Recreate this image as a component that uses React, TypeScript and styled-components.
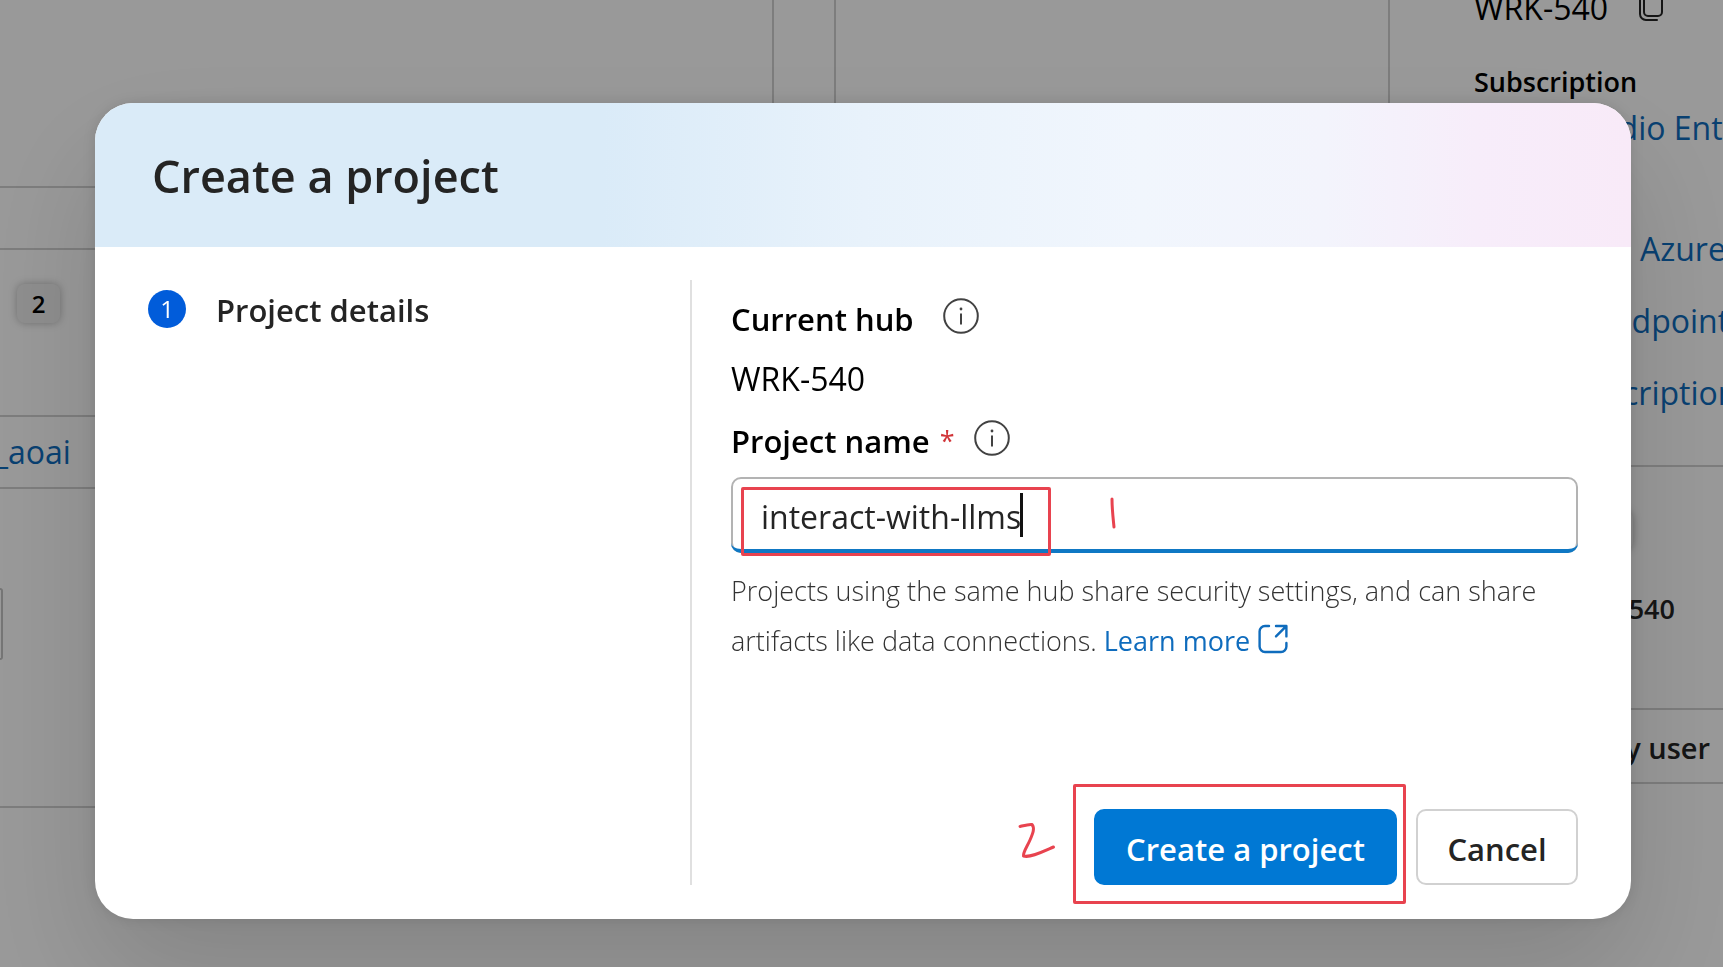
import React from "react";
import styled, { createGlobalStyle } from "styled-components";

const GlobalStyle = createGlobalStyle`
  *, *::before, *::after { box-sizing: border-box; }
  html, body { margin: 0; padding: 0; height: 100%; overflow: hidden; }
  body { background: #fff; color: #000; font-family: "Open Sans", "Noto Sans", sans-serif; }
  button, input { font-family: inherit; }
  h1, h2, p { margin: 0; }
`;

/* ---------- page behind the dialog ---------- */

const Page = styled.main`
  display: grid;
  grid-template-columns: 774fr 556fr 273fr;
  column-gap: 60px;
  height: 100vh;
  overflow: hidden;
`;

const Column = styled.div`
  display: flex;
  flex-direction: column;
  min-width: 0;
`;

const Card = styled.section<{ $height: number; $open?: boolean }>`
  height: ${(p) => p.$height}px;
  border: 2px solid #d1d1d1;
  border-left: ${(p) => (p.$open ? "0" : "2px solid #d1d1d1")};
  border-top-width: ${(p) => (p.$open ? "2px" : "0")};
  flex: none;
`;

const TopCard = styled(Card)`
  border-top: 0;
  margin-bottom: 60px;
`;

const CardHead = styled.div`
  height: 165px;
  padding: 34px 17px;
`;

const CountBadge = styled.span`
  display: flex;
  align-items: center;
  justify-content: center;
  width: 43px;
  height: 39px;
  border-radius: 8px;
  background: #ededed;
  box-shadow: 0 0 8px rgba(0, 0, 0, 0.28);
  font-size: 24px;
  line-height: 32px;
  font-weight: 600;
`;

const CardRow = styled.div`
  display: flex;
  align-items: center;
  height: 74px;
  border: solid #d1d1d1;
  border-width: 2px 0;
`;

const PageLink = styled.a<{ $indent?: number }>`
  display: block;
  margin-left: ${(p) => p.$indent ?? 0}px;
  color: #0f6cbd;
  font-size: 32px;
  line-height: 72px;
  text-decoration: none;
  white-space: nowrap;
`;

const PagerButton = styled.button`
  display: block;
  width: 3px;
  height: 72px;
  margin-top: 99px;
  padding: 0;
  border: 2px solid #c4c4c4;
  border-left: 0;
  border-radius: 0 6px 6px 0;
  background: none;
`;

const Aside = styled.aside`
  display: flex;
  flex-direction: column;
  min-width: 0;
  overflow: hidden;
`;

const Details = styled.div`
  display: flex;
  flex-direction: column;
  flex: none;
  height: 467px;
  padding-left: 24px;
  border-bottom: 2px solid #d1d1d1;
  overflow: hidden;
`;

const DetailValue = styled.div`
  display: flex;
  align-items: flex-end;
  gap: 30px;
  height: 30px;
  font-size: 32px;
  line-height: 44px;

  svg {
    margin-bottom: 8px;
  }
`;

const DetailLabel = styled.h2`
  margin-top: 30px;
  font-size: 27px;
  line-height: 44px;
  font-weight: 600;
`;

const DetailLinks = styled.div<{ $gap: number }>`
  margin-top: ${(p) => p.$gap}px;
`;

const AsideText = styled.p`
  padding-right: 48px;
  text-align: right;
  color: #242424;
  font-size: 27px;
  line-height: 44px;
  font-weight: 600;
`;

const AsideBadge = styled(CountBadge)`
  flex: none;
  margin: 44px 0 37px 140px;
`;

const AsideRow = styled.div`
  display: flex;
  align-items: center;
  justify-content: flex-end;
  height: 76px;
  margin-top: 77px;
  padding: 4px 13px 0 0;
  border: solid #d1d1d1;
  border-width: 2px 0;
  color: #242424;
  font-size: 29px;
  line-height: 44px;
  font-weight: 600;
`;

/* ---------- dialog ---------- */

const Overlay = styled.div`
  position: fixed;
  inset: 0;
  padding: 103px 92px 48px 95px;
  background: rgba(0, 0, 0, 0.4);
`;

const Dialog = styled.div`
  border-radius: 38px;
  background: #fff;
  box-shadow: 0 0 16px rgba(0, 0, 0, 0.12), 0 56px 120px rgba(0, 0, 0, 0.14);
`;

const DialogHeader = styled.header`
  display: flex;
  align-items: center;
  height: 144px;
  padding: 2px 57px 0;
  border-radius: 38px 38px 0 0;
  background: linear-gradient(
    90deg,
    #daebf8 0%,
    #daebf8 33%,
    #e8f2fb 50%,
    #f1f6fd 68%,
    #f3f4fc 80%,
    #f7edfa 90%,
    #f8eaf8 100%
  );
`;

const DialogTitle = styled.h1`
  color: #242424;
  font-size: 45px;
  line-height: 60px;
  font-weight: 600;
`;

const DialogBody = styled.div`
  display: grid;
  grid-template-columns: 597px minmax(0, 1fr);
  padding: 33px 0 34px;
`;

const Steps = styled.nav`
  padding: 8px 53px;
  border-right: 2px solid #e0e0e0;
`;

const Step = styled.div`
  display: flex;
  align-items: center;
  gap: 30px;
  color: #242424;
  font-size: 31px;
  line-height: 44px;
  font-weight: 600;
`;

const StepNumber = styled.span`
  display: flex;
  align-items: center;
  justify-content: center;
  width: 38px;
  height: 38px;
  margin-bottom: 2px;
  border-radius: 50%;
  background: #015cda;
  color: #fff;
  font-size: 24px;
  line-height: 32px;
  font-weight: 400;
`;

const Form = styled.form`
  padding: 9px 53px 0 39px;
`;

const FieldRow = styled.div<{ $tall?: boolean }>`
  display: flex;
  align-items: center;
  height: ${(p) => (p.$tall ? 64 : 60)}px;
  font-size: 32px;
  line-height: 44px;
`;

const Label = styled.label`
  font-size: 31px;
  font-weight: 600;
`;

const Required = styled.span`
  margin: 0 19px 0 10px;
  color: #d13438;
  font-size: 27px;
  line-height: 44px;
`;

const InfoButton = styled.button<{ $gap?: number }>`
  display: flex;
  margin: 0 0 6px ${(p) => p.$gap ?? 0}px;
  padding: 0;
  border: 0;
  background: none;
  color: #424242;
`;

const InputWrap = styled.div`
  position: relative;
  height: 76px;
  margin-top: 4px;
`;

const TextInput = styled.input`
  display: block;
  width: 100%;
  height: 76px;
  padding: 2px 28px 0;
  border: 2px solid #b3b3b3;
  border-radius: 10px;
  outline: 0;
  background: #fff;
  color: #242424;
  font-size: 32px;
  line-height: 44px;
`;

const FocusLine = styled.span`
  position: absolute;
  inset: auto 0 0 0;
  height: 10px;
  border-bottom: 4px solid #0f78c4;
  border-radius: 0 0 10px 10px;
`;

const Caret = styled.span`
  position: absolute;
  left: 289px;
  top: 16px;
  width: 3px;
  height: 44px;
  background: #111;
`;

const MarkBox = styled.span<{ $inset: string; $width?: number }>`
  position: absolute;
  inset: ${(p) => p.$inset};
  width: ${(p) => (p.$width ? `${p.$width}px` : "auto")};
  border: 3px solid #e8434f;
  border-radius: 2px;
  pointer-events: none;
`;

const MarkStroke = styled.svg<{ $left: number; $top: number }>`
  position: absolute;
  left: ${(p) => p.$left}px;
  top: ${(p) => p.$top}px;
  fill: none;
  stroke: #e8434f;
  stroke-width: 3;
  stroke-linecap: round;
  stroke-linejoin: round;
  pointer-events: none;
`;

const Hint = styled.p`
  margin-top: 13px;
  color: #333;
  font-size: 27px;
  line-height: 50px;
  font-weight: 300;
`;

const HintLink = styled.a`
  color: #0f6cbd;
  font-weight: 400;
  text-decoration: none;
  white-space: nowrap;

  svg {
    margin-left: 8px;
    vertical-align: -3px;
  }
`;

const Footer = styled.footer`
  display: flex;
  justify-content: flex-end;
  gap: 19px;
  margin-top: 143px;
`;

const PrimaryWrap = styled.div`
  position: relative;
`;

const Button = styled.button<{ $primary?: boolean }>`
  width: ${(p) => (p.$primary ? 303 : 162)}px;
  height: 76px;
  padding: 4px 0 0;
  border: 2px solid ${(p) => (p.$primary ? "#0078d4" : "#d1d1d1")};
  border-radius: 10px;
  background: ${(p) => (p.$primary ? "#0078d4" : "#fff")};
  color: ${(p) => (p.$primary ? "#fff" : "#242424")};
  font-size: 31px;
  line-height: 44px;
  font-weight: 600;
  white-space: nowrap;
`;

const InfoIcon = () => (
  <svg width="36" height="36" viewBox="0 0 36 36" fill="none" aria-hidden="true">
    <circle cx="18" cy="18" r="16.8" stroke="currentColor" strokeWidth="2" />
    <path d="M18 15.4v11" stroke="currentColor" strokeWidth="2" />
    <circle cx="18" cy="11" r="1.4" fill="currentColor" />
  </svg>
);

const OpenIcon = () => (
  <svg width="30" height="30" viewBox="0 0 30 30" fill="none" stroke="currentColor" strokeWidth="2.4" strokeLinecap="round" strokeLinejoin="round" aria-hidden="true">
    <path d="M11 2H7a5.4 5.4 0 0 0-5.4 5.4v15.2A5.4 5.4 0 0 0 7 28h16a5.4 5.4 0 0 0 5.4-5.4V19" />
    <path d="M18 2h10.4v10.4M28 2.4 18 12.4" />
  </svg>
);

const CopyIcon = () => (
  <svg width="26" height="32" viewBox="0 0 26 32" fill="none" stroke="#242424" strokeWidth="2" strokeLinecap="round" aria-hidden="true">
    <rect x="6" y="1" width="18" height="25" rx="4" />
    <path d="M2 5v19a6 6 0 0 0 6 6h11" />
  </svg>
);

export default function App() {
  return (
    <>
      <GlobalStyle />
      <Page>
        <Column>
          <TopCard $height={188} $open />
          <Card $height={560} $open>
            <CardHead>
              <CountBadge>2</CountBadge>
            </CardHead>
            <CardRow>
              <PageLink href="#aoai" $indent={-6}>_aoai</PageLink>
            </CardRow>
            <PagerButton type="button" aria-label="Next page" />
          </Card>
        </Column>
        <Column>
          <Card $height={808} />
        </Column>
        <Aside>
          <Details>
            <DetailValue>
              WRK-540
              <CopyIcon />
            </DetailValue>
            <DetailLabel>Subscription</DetailLabel>
            <DetailLinks $gap={-12}>
              <PageLink href="#subscription" $indent={96}>Studio Enterprise</PageLink>
            </DetailLinks>
            <DetailLinks $gap={49}>
              <PageLink href="#azure" $indent={166}>Azure</PageLink>
              <PageLink href="#endpoint" $indent={120}>endpoint</PageLink>
              <PageLink href="#manage" $indent={77}>Subscription</PageLink>
            </DetailLinks>
          </Details>
          <AsideBadge />
          <AsideText>WRK-540</AsideText>
          <AsideRow>any user</AsideRow>
        </Aside>
      </Page>

      <Overlay>
        <Dialog role="dialog" aria-modal="true" aria-labelledby="dialog-title">
          <DialogHeader>
            <DialogTitle id="dialog-title">Create a project</DialogTitle>
          </DialogHeader>
          <DialogBody>
            <Steps aria-label="Steps">
              <Step aria-current="step">
                <StepNumber>1</StepNumber>
                Project details
              </Step>
            </Steps>
            <Form onSubmit={(e) => e.preventDefault()}>
              <FieldRow>
                <Label as="span">Current hub</Label>
                <InfoButton type="button" aria-label="About the current hub" $gap={29}>
                  <InfoIcon />
                </InfoButton>
              </FieldRow>
              <FieldRow>WRK-540</FieldRow>
              <FieldRow $tall>
                <Label htmlFor="project-name">Project name</Label>
                <Required aria-hidden="true">*</Required>
                <InfoButton type="button" aria-label="About the project name">
                  <InfoIcon />
                </InfoButton>
              </FieldRow>
              <InputWrap>
                <TextInput id="project-name" type="text" defaultValue="interact-with-llms" required spellCheck={false} />
                <FocusLine />
                <Caret />
                <MarkBox $inset="10px auto -3px 10px" $width={310} />
                <MarkStroke $left={376} $top={18} width="12" height="36" viewBox="0 0 12 36" aria-hidden="true">
                  <path d="M5 4C5 14 6 22 7 32" />
                </MarkStroke>
              </InputWrap>
              <Hint>
                Projects using the same hub share security settings, and can share artifacts like data connections.{" "}
                <HintLink href="#learn-more">
                  Learn more
                  <OpenIcon />
                </HintLink>
              </Hint>
              <Footer>
                <PrimaryWrap>
                  <Button type="submit" $primary>Create a project</Button>
                  <MarkBox $inset="-25px -9px -19px -21px" />
                  <MarkStroke $left={-79} $top={11} width="46" height="42" viewBox="0 0 46 42" aria-hidden="true">
                    <path d="M5 6.500C9 5.500 14 4 17 4.500C20 8 18 13 15 20C12 27 8 32 8.500 36C15 38 27 32 38.500 27" />
                  </MarkStroke>
                </PrimaryWrap>
                <Button type="button">Cancel</Button>
              </Footer>
            </Form>
          </DialogBody>
        </Dialog>
      </Overlay>
    </>
  );
}
